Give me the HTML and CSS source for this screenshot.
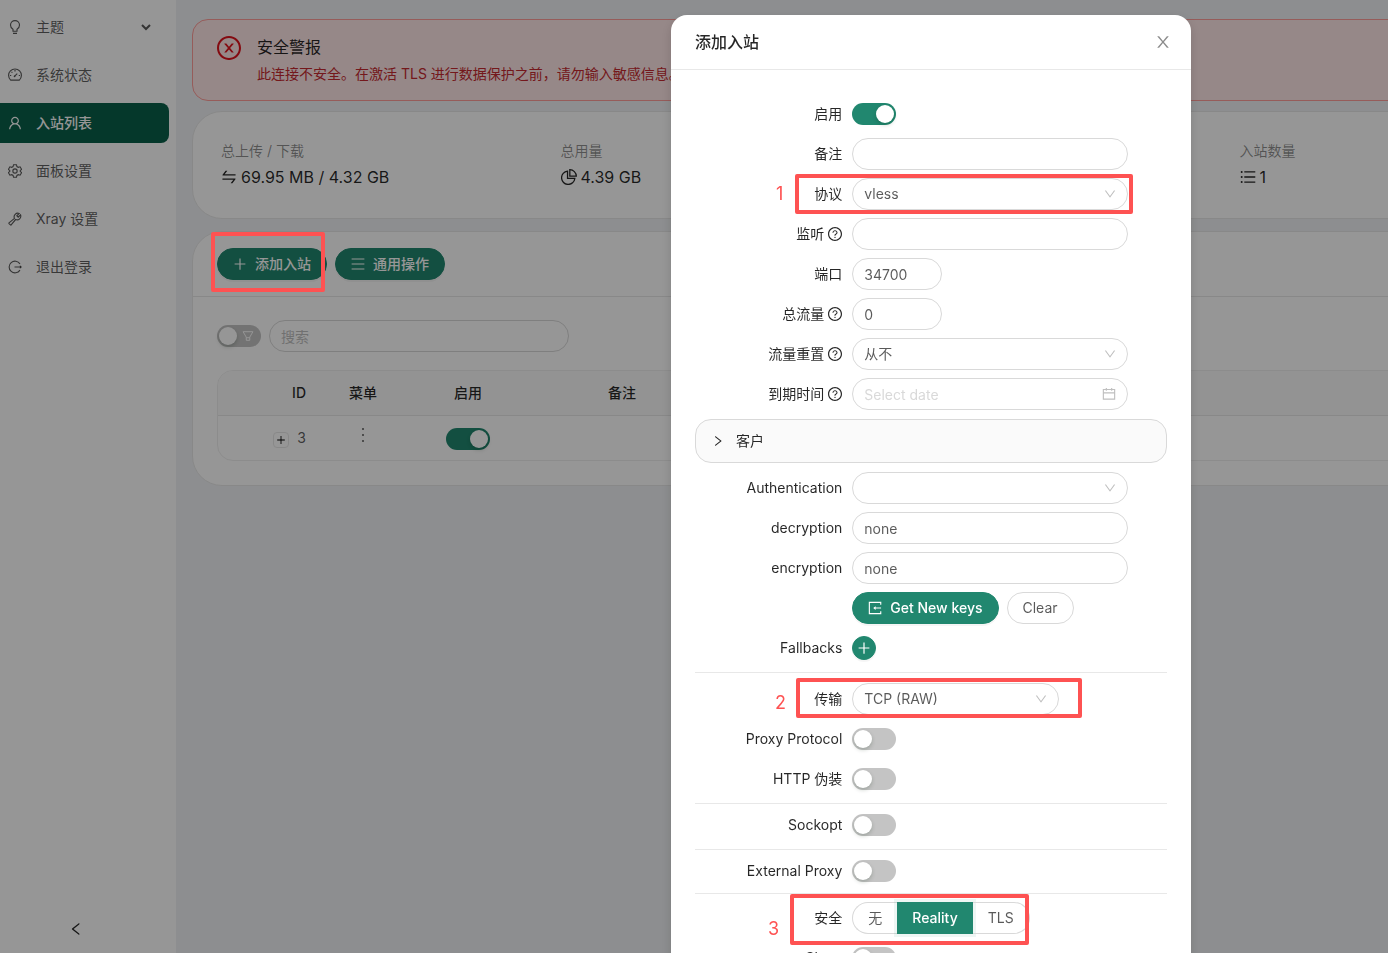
FILE: index.html
```html
<!DOCTYPE html>
<html lang="zh-CN">
<head>
    <meta charset="UTF-8">
    <meta name="viewport" content="width=device-width, initial-scale=1.0">
    <title>入站列表</title>
    <link rel="stylesheet" href="styles.css">
</head>
<body>
    <svg width="0" height="0" class="sprite" aria-hidden="true">
        <symbol id="i-plus" viewBox="64 64 896 896"><path d="M482 152h60q8 0 8 8v704q0 8-8 8h-60q-8 0-8-8V160q0-8 8-8z"/><path d="M176 474h672q8 0 8 8v60q0 8-8 8H176q-8 0-8-8v-60q0-8 8-8z"/></symbol>
        <symbol id="i-down" viewBox="64 64 896 896"><path d="M884 256h-75c-5.1 0-9.9 2.5-12.9 6.6L512 654.2 227.9 262.6c-3-4.1-7.8-6.6-12.9-6.6h-75c-6.5 0-10.3 7.4-6.5 12.7l352.6 486.1c12.8 17.6 39 17.6 51.7 0l352.6-486.1c3.9-5.3.1-12.7-6.4-12.7z"/></symbol>
        <symbol id="i-right" viewBox="64 64 896 896"><path d="M765.7 486.8L314.9 134.7A7.97 7.97 0 0 0 302 141v77.3c0 4.9 2.3 9.6 6.1 12.6l360 281.1-360 281.1c-3.9 3-6.1 7.7-6.1 12.6V883c0 6.7 7.7 10.4 12.9 6.3l450.8-352.1a31.96 31.96 0 0 0 0-50.4z"/></symbol>
        <symbol id="i-left" viewBox="64 64 896 896"><path d="M724 218.3V141c0-6.7-7.7-10.4-12.9-6.3L260.3 486.8a31.86 31.86 0 0 0 0 50.3l450.8 352.1c5.3 4.1 12.9.4 12.9-6.3v-77.3c0-4.9-2.3-9.6-6.1-12.6l-360-281 360-281.1c3.8-3 6.1-7.7 6.1-12.6z"/></symbol>
        <symbol id="i-close" viewBox="64 64 896 896"><path d="M563.8 512l262.5-312.9c4.4-5.2.7-13.1-6.1-13.1h-79.8c-4.7 0-9.2 2.1-12.3 5.7L511.6 449.8 295.1 191.7c-3-3.6-7.5-5.7-12.3-5.7H203c-6.8 0-10.5 7.9-6.1 13.1L459.4 512 196.9 824.9A7.95 7.95 0 0 0 203 838h79.8c4.7 0 9.2-2.1 12.3-5.7l216.5-258.1 216.5 258.1c3 3.6 7.5 5.7 12.3 5.7h79.8c6.8 0 10.5-7.9 6.1-13.1L563.8 512z"/></symbol>
        <symbol id="i-error" viewBox="64 64 896 896"><path d="M685.4 354.8c0-4.4-3.6-8-8-8l-66 .3L512 465.6l-99.3-118.4-66.1-.3c-4.4 0-8 3.5-8 8 0 1.9.7 3.7 1.9 5.2l130.1 155L340.5 670a8.32 8.32 0 0 0-1.9 5.2c0 4.4 3.6 8 8 8l66.1-.3L512 564.4l99.3 118.4 66 .3c4.4 0 8-3.5 8-8 0-1.9-.7-3.7-1.9-5.2L553.5 515l130.1-155c1.2-1.4 1.8-3.3 1.8-5.2z"/><path d="M512 65C264.6 65 64 265.6 64 513s200.6 448 448 448 448-200.6 448-448S759.4 65 512 65zm0 820c-205.4 0-372-166.6-372-372s166.6-372 372-372 372 166.6 372 372-166.6 372-372 372z"/></symbol>
        <symbol id="i-help" viewBox="64 64 896 896"><path d="M512 64C264.6 64 64 264.6 64 512s200.6 448 448 448 448-200.6 448-448S759.4 64 512 64zm0 820c-205.4 0-372-166.6-372-372s166.6-372 372-372 372 166.6 372 372-166.6 372-372 372z"/><path d="M623.6 316.7C593.6 290.4 554 276 512 276s-81.6 14.5-111.6 40.7C369.2 344 352 380.7 352 420v7.6c0 4.4 3.6 8 8 8h48c4.4 0 8-3.6 8-8V420c0-44.1 43.1-80 96-80s96 35.9 96 80c0 31.1-22 59.6-56.1 72.7-21.2 8.1-39.2 22.3-52.1 40.9-13.1 19-19.9 41.8-19.9 64.9V620c0 4.4 3.6 8 8 8h48c4.4 0 8-3.6 8-8v-22.7a48.3 48.3 0 0 1 30.9-44.8c59-22.7 97.1-74.7 97.1-132.5.1-39.3-17.1-76-48.3-103.3zM472 732a40 40 0 1 0 80 0 40 40 0 1 0-80 0z"/></symbol>
        <symbol id="i-user" viewBox="64 64 896 896"><path d="M858.5 763.6a374 374 0 0 0-80.6-119.5 375.63 375.63 0 0 0-119.5-80.6c-.4-.2-.8-.3-1.2-.5C719.5 518 760 444.7 760 362c0-137-111-248-248-248S264 225 264 362c0 82.7 40.5 156 102.8 201.1-.4.2-.8.3-1.2.5-44.8 18.9-85 46-119.5 80.6a375.63 375.63 0 0 0-80.6 119.5A371.7 371.7 0 0 0 136 901.8a8 8 0 0 0 8 8.2h60c4.4 0 7.9-3.5 8-7.8 2-77.2 33-149.5 87.8-204.3 56.7-56.7 132-87.9 212.2-87.9s155.5 31.2 212.2 87.9C779 752.7 810 825 812 902.2c.1 4.4 3.6 7.8 8 7.8h60a8 8 0 0 0 8-8.2c-1-47.8-10.9-94.3-29.5-138.2zM512 534c-45.9 0-89.1-17.9-121.6-50.4S340 407.9 340 362c0-45.9 17.9-89.1 50.4-121.6S466.1 190 512 190s89.1 17.9 121.6 50.4S684 316.1 684 362c0 45.9-17.9 89.1-50.4 121.6S557.9 534 512 534z"/></symbol>
        <symbol id="i-swap" viewBox="64 64 896 896"><path d="M847.9 592H152c-4.4 0-8 3.6-8 8v60c0 4.4 3.6 8 8 8h605.2L612.9 851c-4.1 5.2-.4 13 6.3 13h72.5c4.9 0 9.5-2.2 12.6-6.1l168.8-214.1c16.5-21 1.6-51.8-25.2-51.8zM872 356H266.8l144.3-183c4.1-5.2.4-13-6.3-13h-72.5c-4.9 0-9.5 2.2-12.6 6.1L150.9 380.2c-16.5 21-1.6 51.8 25.1 51.8h696c4.4 0 8-3.6 8-8v-60c0-4.4-3.6-8-8-8z"/></symbol>
        <symbol id="i-bulb" viewBox="64 64 896 896"><path class="line" d="M384 780V660C290 612 224 516 224 390a288 288 0 0 1 576 0c0 126-66 222-160 270v120zM384 922h256"/></symbol>
        <symbol id="i-dashboard" viewBox="64 64 896 896"><path class="line" d="M235 838a410 410 0 1 1 554 0zM488 590l170-170M512 190v90M190 542h80M754 542h80M290 310l54 54"/><circle cx="484" cy="594" r="56"/></symbol>
        <symbol id="i-setting" viewBox="64 64 896 896"><path class="line" d="M420 110h184l32 118 84 48 118-32 92 160-86 86v44l86 86-92 160-118-32-84 48-32 118H420l-32-118-84-48-118 32-92-160 86-86v-44l-86-86 92-160 118 32 84-48z"/><circle class="line" cx="512" cy="512" r="138"/></symbol>
        <symbol id="i-tool" viewBox="64 64 896 896"><path class="line" d="M865 244L715 394l-85-85 150-150a236 236 0 0 0-302 316L130 760q-20 20 0 42l92 92q20 20 42 0l286-348a236 236 0 0 0 315-302z"/></symbol>
        <symbol id="i-logout" viewBox="64 64 896 896"><path class="line" d="M830 310a376 376 0 1 0 0 404M480 512h400"/><path d="M825 395l135 117-135 117z"/></symbol>
        <symbol id="i-pie" viewBox="64 64 896 896"><path class="line" d="M430 186a372 372 0 1 0 408 408H430zM558 102v364h364A372 372 0 0 0 558 102z"/></symbol>
        <symbol id="i-list" viewBox="64 64 896 896"><path class="line" d="M304 228h616M304 512h616M304 796h616"/><circle cx="160" cy="228" r="56"/><circle cx="160" cy="512" r="56"/><circle cx="160" cy="796" r="56"/></symbol>
        <symbol id="i-menu" viewBox="64 64 896 896"><path class="line" d="M104 192h816M104 512h816M104 832h816"/></symbol>
        <symbol id="i-filter" viewBox="64 64 896 896"><path class="line" d="M144 192h736L642 598v234H382V598zM382 640h260"/></symbol>
        <symbol id="i-calendar" viewBox="64 64 896 896"><path class="line" d="M150 222h724v620H150zM150 440h724M340 120v180M684 120v180"/></symbol>
        <symbol id="i-import" viewBox="64 64 896 896"><path class="line" d="M880 300V150H150v724h730V724M500 512h400"/><path d="M400 512l150-120v240z"/></symbol>
    </svg>

    <div class="page">
        <aside class="sidebar">
            <nav class="menu">
                <button class="menu-item" type="button"><svg class="icon"><use href="#i-bulb"/></svg>主题<svg class="menu-arrow" viewBox="0 0 10 10"><path d="M1 3l4 4 4-4"/></svg></button>
                <a class="menu-item" href="#"><svg class="icon"><use href="#i-dashboard"/></svg>系统状态</a>
                <a class="menu-item active" href="#"><svg class="icon"><use href="#i-user"/></svg>入站列表</a>
                <a class="menu-item" href="#"><svg class="icon"><use href="#i-setting"/></svg>面板设置</a>
                <a class="menu-item" href="#"><svg class="icon"><use href="#i-tool"/></svg>Xray 设置</a>
                <a class="menu-item" href="#"><svg class="icon"><use href="#i-logout"/></svg>退出登录</a>
            </nav>
            <button class="sider-trigger" type="button" aria-label="收起"><svg class="icon"><use href="#i-left"/></svg></button>
        </aside>

        <main class="content">
            <div class="alert">
                <svg class="alert-icon"><use href="#i-error"/></svg>
                <div>
                    <div class="alert-title">安全警报</div>
                    <div class="alert-text">此连接不安全。在激活 TLS 进行数据保护之前，请勿输入敏感信息。</div>
                </div>
            </div>

            <section class="card stats">
                <div>
                    <div class="stat-title">总上传 / 下载</div>
                    <div class="stat-value"><svg class="icon"><use href="#i-swap"/></svg>69.95 MB / 4.32 GB</div>
                </div>
                <div>
                    <div class="stat-title">总用量</div>
                    <div class="stat-value"><svg class="icon"><use href="#i-pie"/></svg>4.39 GB</div>
                </div>
                <div class="stat-last">
                    <div class="stat-title">入站数量</div>
                    <div class="stat-value"><svg class="icon"><use href="#i-list"/></svg>1</div>
                </div>
            </section>

            <section class="card">
                <div class="card-head">
                    <div class="marked">
                        <button class="btn btn-primary" type="button"><svg class="icon"><use href="#i-plus"/></svg>添加入站</button>
                        <span class="mark mark-add"></span>
                    </div>
                    <button class="btn btn-primary" type="button"><svg class="icon"><use href="#i-menu"/></svg>通用操作</button>
                </div>
                <div class="card-body">
                    <div class="toolbar">
                        <label class="filter-switch"><input class="switch" type="checkbox" aria-label="筛选"><svg class="filter-icon"><use href="#i-filter"/></svg></label>
                        <input class="input search" type="text" placeholder="搜索" aria-label="搜索">
                    </div>
                    <table class="table">
                        <colgroup>
                            <col class="col-id"><col class="col-menu"><col class="col-enable"><col class="col-remark"><col><col class="col-traffic">
                        </colgroup>
                        <thead>
                            <tr><th class="cell-id">ID</th><th>菜单</th><th>启用</th><th>备注</th><th></th><th>流量</th></tr>
                        </thead>
                        <tbody>
                            <tr>
                                <td class="cell-id"><button class="expand" type="button" aria-label="展开"><svg><use href="#i-plus"/></svg></button>3</td>
                                <td><button class="more" type="button" aria-label="菜单"><svg viewBox="0 0 16 16"><circle cx="8" cy="2" r="1"/><circle cx="8" cy="8" r="1"/><circle cx="8" cy="14" r="1"/></svg></button></td>
                                <td><input class="switch" type="checkbox" checked aria-label="启用"></td>
                                <td></td>
                                <td></td>
                                <td><span class="tag">4.39 GB</span></td>
                            </tr>
                        </tbody>
                    </table>
                </div>
            </section>
        </main>
    </div>

    <div class="modal-mask">
        <div class="modal" role="dialog" aria-labelledby="modal-title">
            <header class="modal-head">
                <h2 id="modal-title">添加入站</h2>
                <button class="modal-close" type="button" aria-label="关闭"><svg class="icon"><use href="#i-close"/></svg></button>
            </header>
            <form class="modal-body">
                <div class="row"><label for="enable">启用</label><div class="control"><input class="switch" type="checkbox" id="enable" checked></div></div>
                <div class="row"><label for="remark">备注</label><div class="control"><input class="input" type="text" id="remark"></div></div>
                <div class="row">
                    <label for="protocol">协议</label>
                    <div class="control"><div class="select"><select class="input" id="protocol"><option>vless</option></select><svg><use href="#i-down"/></svg></div></div>
                    <span class="mark mark-1"></span><span class="mark-no no-1">1</span>
                </div>
                <div class="row"><label for="listen">监听<svg class="icon"><use href="#i-help"/></svg></label><div class="control"><input class="input" type="text" id="listen"></div></div>
                <div class="row"><label for="port">端口</label><div class="control"><input class="input input-number" type="text" id="port" value="34700"></div></div>
                <div class="row"><label for="total">总流量<svg class="icon"><use href="#i-help"/></svg></label><div class="control"><input class="input input-number" type="text" id="total" value="0"></div></div>
                <div class="row">
                    <label for="reset">流量重置<svg class="icon"><use href="#i-help"/></svg></label>
                    <div class="control"><div class="select"><select class="input" id="reset"><option>从不</option></select><svg><use href="#i-down"/></svg></div></div>
                </div>
                <div class="row">
                    <label for="expire">到期时间<svg class="icon"><use href="#i-help"/></svg></label>
                    <div class="control"><div class="select date"><input class="input" type="text" id="expire" placeholder="Select date"><svg><use href="#i-calendar"/></svg></div></div>
                </div>

                <button class="collapse" type="button"><svg><use href="#i-right"/></svg>客户</button>

                <div class="row">
                    <label for="auth">Authentication</label>
                    <div class="control"><div class="select"><select class="input" id="auth"><option></option></select><svg><use href="#i-down"/></svg></div></div>
                </div>
                <div class="row"><label for="dec">decryption</label><div class="control"><input class="input" type="text" id="dec" value="none"></div></div>
                <div class="row"><label for="enc">encryption</label><div class="control"><input class="input" type="text" id="enc" value="none"></div></div>
                <div class="row">
                    <div class="control control-only">
                        <button class="btn btn-primary" type="button"><svg class="icon"><use href="#i-import"/></svg>Get New keys</button>
                        <button class="btn" type="button">Clear</button>
                    </div>
                </div>
                <div class="row"><label for="fallback">Fallbacks</label><div class="control"><button class="btn btn-primary btn-round" type="button" id="fallback" aria-label="Add"><svg class="icon"><use href="#i-plus"/></svg></button></div></div>

                <hr class="divider-wide">

                <div class="row">
                    <label for="network">传输</label>
                    <div class="control"><div class="select select-short"><select class="input" id="network"><option>TCP (RAW)</option></select><svg><use href="#i-down"/></svg></div></div>
                    <span class="mark mark-2"></span><span class="mark-no no-2">2</span>
                </div>
                <div class="row"><label for="proxy">Proxy Protocol</label><div class="control"><input class="switch" type="checkbox" id="proxy"></div></div>
                <div class="row"><label for="http">HTTP 伪装</label><div class="control"><input class="switch" type="checkbox" id="http"></div></div>
                <hr>
                <div class="row"><label for="sockopt">Sockopt</label><div class="control"><input class="switch" type="checkbox" id="sockopt"></div></div>
                <hr>
                <div class="row"><label for="external">External Proxy</label><div class="control"><input class="switch" type="checkbox" id="external"></div></div>
                <hr class="divider-tight">
                <div class="row">
                    <label for="sec-none">安全</label>
                    <div class="control">
                        <div class="radio-group">
                            <label><input type="radio" name="security" id="sec-none">无</label>
                            <label><input type="radio" name="security" checked>Reality</label>
                            <label><input type="radio" name="security">TLS</label>
                        </div>
                    </div>
                    <span class="mark mark-3"></span><span class="mark-no no-3">3</span>
                </div>
                <div class="row"><label for="show">Show</label><div class="control"><input class="switch" type="checkbox" id="show"></div></div>
            </form>
        </div>
    </div>
</body>
</html>
```
FILE: styles.css
```css
* {
    box-sizing: border-box;
}
body {
    margin: 0;
    height: 100vh;
    overflow: hidden;
    font-family: Inter, "Noto Sans CJK SC", sans-serif;
    font-size: 14px;
    line-height: 22px;
    color: rgba(0, 0, 0, 0.85);
    background: #f0f2f5;
}
button, input, select {
    font: inherit;
    color: inherit;
    margin: 0;
}
button {
    cursor: pointer;
    border: none;
    background: none;
    padding: 0;
}
svg {
    fill: currentColor;
    flex: none;
}
.sprite {
    position: absolute;
}
.line {
    fill: none;
    stroke: currentColor;
    stroke-width: 72px;
}
.icon {
    width: 14px;
    height: 14px;
}
.page {
    display: flex;
    height: 100%;
    overflow: hidden;
}

/* sidebar */
.sidebar {
    flex: none;
    width: 176px;
    display: flex;
    flex-direction: column;
    justify-content: space-between;
    background: #fff;
}
.menu {
    display: flex;
    flex-direction: column;
    gap: 8px;
    padding: 7px 7px 0 0;
}
.menu-item {
    display: flex;
    align-items: center;
    gap: 14px;
    height: 40px;
    padding: 0 18px 0 8px;
    border-radius: 0 8px 8px 0;
    color: rgba(0, 0, 0, 0.65);
    text-decoration: none;
}
.menu-item.active {
    background: #0a6049;
    color: #fff;
    font-weight: 500;
}
.menu-arrow {
    width: 10px;
    height: 10px;
    margin-left: auto;
    fill: none;
    stroke: currentColor;
    stroke-width: 2px;
}
.sider-trigger {
    width: 152px;
    height: 48px;
    display: flex;
    align-items: center;
    justify-content: center;
}

/* content */
.content {
    flex: 1 0 1432px;
    padding: 19px 16px;
}
.alert {
    display: flex;
    gap: 16px;
    padding: 15px 24px;
    height: 82px;
    border: 1px solid #ff9c99;
    border-radius: 16px;
    background: #ffe7e7;
    margin-bottom: 10px;
}
.alert-icon {
    width: 24px;
    height: 24px;
    margin-top: 1px;
    color: #e0121c;
}
.alert-title {
    font-size: 16px;
    line-height: 24px;
    margin-bottom: 4px;
}
.alert-text {
    color: #c52a30;
}
.card {
    border: 1px solid #e8e8e8;
    border-radius: 30px;
    background: #fff;
    margin-bottom: 12px;
}
.stats {
    display: grid;
    grid-template-columns: repeat(4, 1fr);
    padding: 28px 12px 28px 28px;
    height: 108px;
}
.stat-last {
    grid-column: 4;
}
.stat-title {
    color: rgba(0, 0, 0, 0.45);
    margin-bottom: 3px;
}
.stat-value {
    display: flex;
    align-items: center;
    gap: 4px;
    font-size: 16px;
    line-height: 24px;
}
.stat-value .icon {
    width: 16px;
    height: 16px;
}
.card-head {
    display: flex;
    gap: 8px;
    padding: 16px 24px;
    border-bottom: 1px solid #e8e8e8;
}
.card-body {
    padding: 23px 24px 24px;
}
.toolbar {
    display: flex;
    align-items: center;
    gap: 8px;
    margin-bottom: 18px;
}
.filter-switch {
    display: flex;
    position: relative;
}
.filter-icon {
    position: absolute;
    right: 7px;
    top: 5px;
    width: 12px;
    height: 12px;
    color: #fff;
}
.search.input {
    width: 300px;
}

.table {
    width: 100%;
    table-layout: fixed;
    border: 1px solid #efefef;
    border-radius: 16px;
    border-spacing: 0;
    overflow: hidden;
}
.col-id {
    width: 96px;
}
.col-menu {
    width: 98px;
}
.col-enable {
    width: 112px;
}
.col-remark {
    width: 196px;
}
.col-traffic {
    width: 168px;
}
.table th, .table td {
    height: 44px;
    padding: 0 8px;
    text-align: center;
}
.table th {
    height: 45px;
    background: #fafafa;
    font-weight: 500;
    border-bottom: 1px solid #e8e8e8;
}
.table td {
    color: rgba(0, 0, 0, 0.65);
}
.table .cell-id {
    text-align: right;
}
.table .switch {
    vertical-align: middle;
}
.expand {
    width: 16px;
    height: 16px;
    margin-right: 8px;
    border: 1px solid #e8e8e8;
    border-radius: 4px;
    vertical-align: -4px;
    color: #000;
}
.expand svg {
    display: block;
    width: 10px;
    height: 10px;
    margin: 2px;
}
.more svg {
    display: block;
    width: 16px;
    height: 16px;
}
.tag {
    display: inline-block;
    min-width: 88px;
    padding: 0 7px;
    font-size: 12px;
    line-height: 20px;
    text-align: left;
    border: 1px solid #d9a8d0;
    border-radius: 30px;
    background: #f9f0f8;
    color: #8a2c78;
}

/* controls */
.btn {
    display: inline-flex;
    align-items: center;
    justify-content: center;
    gap: 8px;
    height: 32px;
    padding: 0 15px;
    border: 1px solid #d9d9d9;
    border-radius: 30px;
    background: #fff;
    color: rgba(0, 0, 0, 0.65);
}
.btn-primary {
    border-color: #21876f;
    background: #21876f;
    color: #fff;
    font-weight: 500;
    box-shadow: 0 2px 0 rgba(0, 0, 0, 0.04);
}
.btn-round {
    width: 24px;
    height: 24px;
    padding: 0;
}
.input {
    display: block;
    width: 100%;
    height: 32px;
    padding: 4px 11px;
    border: 1px solid #d9d9d9;
    border-radius: 30px;
    background: #fff;
    color: rgba(0, 0, 0, 0.65);
    appearance: none;
    outline: none;
}
.input::placeholder {
    color: #bfbfbf;
    opacity: 1;
}
.input-number {
    width: 90px;
}
.select {
    position: relative;
    width: 100%;
}
.select-short {
    width: 75%;
}
.select svg {
    position: absolute;
    right: 12px;
    top: 10px;
    width: 12px;
    height: 12px;
    color: #bfbfbf;
    pointer-events: none;
}
.date svg {
    top: 9px;
    width: 14px;
    height: 14px;
}
.date .input::placeholder {
    color: #d9d9d9;
}
.switch {
    appearance: none;
    position: relative;
    display: inline-block;
    width: 44px;
    height: 22px;
    border-radius: 100px;
    background: #c4c4c4;
    cursor: pointer;
}
.switch::before {
    content: "";
    position: absolute;
    top: 2px;
    left: 2px;
    width: 18px;
    height: 18px;
    border-radius: 9px;
    background: #fff;
    box-shadow: 0 2px 4px rgba(0, 35, 11, 0.2);
}
.switch:checked {
    background: #21876f;
}
.switch:checked::before {
    left: 24px;
}
.radio-group {
    display: flex;
}
.radio-group label {
    height: 32px;
    padding: 0 15px;
    line-height: 30px;
    border: 1px solid #d9d9d9;
    border-width: 1px 0;
    color: rgba(0, 0, 0, 0.65);
}
.radio-group label:first-child {
    border-left-width: 1px;
    border-radius: 30px 0 0 30px;
}
.radio-group label:last-child {
    border-right-width: 1px;
    border-radius: 0 30px 30px 0;
}
.radio-group label:has(:checked) {
    background: #21876f;
    border-color: #21876f;
    color: #fff;
    font-weight: 500;
    box-shadow: 0 0 0 3px rgba(33, 135, 111, 0.08);
}
.radio-group input {
    position: absolute;
    opacity: 0;
    pointer-events: none;
}

/* modal */
.modal-mask {
    position: fixed;
    inset: 0;
    z-index: 10;
    overflow: hidden;
    background: rgba(0, 0, 0, 0.41);
}
.modal {
    width: 520px;
    margin: 15px 0 0 671px;
    border-radius: 16px;
    background: #fff;
    box-shadow: 0 4px 12px rgba(0, 0, 0, 0.15);
}
.modal-head {
    display: flex;
    align-items: center;
    justify-content: space-between;
    padding: 16px 20px 16px 24px;
    border-bottom: 1px solid #e8e8e8;
}
.modal-head h2 {
    margin: 0;
    font-size: 16px;
    font-weight: 500;
    line-height: 22px;
}
.modal-close {
    display: flex;
    color: rgba(0, 0, 0, 0.45);
}
.modal-close .icon {
    width: 16px;
    height: 16px;
}
.modal-body {
    padding: 24px;
}
.row {
    position: relative;
    display: grid;
    grid-template-columns: 8fr 14fr 2fr;
    align-items: center;
    height: 40px;
}
.row > label {
    display: flex;
    align-items: center;
    justify-content: flex-end;
    gap: 4px;
    padding-right: 10px;
}
.control {
    display: flex;
    align-items: center;
    gap: 8px;
}
.control-only {
    grid-column: 2;
}
.collapse {
    display: flex;
    align-items: center;
    gap: 12px;
    width: 100%;
    height: 44px;
    margin: 5px 0;
    padding: 0 16px;
    border: 1px solid #d9d9d9;
    border-radius: 16px;
    background: #fafafa;
}
.collapse svg {
    width: 12px;
    height: 12px;
}
.modal-body hr {
    margin: 4px 0 1px;
    border: none;
    border-top: 1px solid #e8e8e8;
}
.modal-body .divider-wide {
    margin: 4px 0 6px;
}
.modal-body .divider-tight {
    margin: 2px 0 4px;
}

/* red step marks */
.marked {
    position: relative;
    display: flex;
}
.mark {
    position: absolute;
    border: 4px solid #fe5252;
    border-radius: 2px;
    pointer-events: none;
}
.mark-add {
    z-index: 20;
    inset: -16px 2px -12px -6px;
}
.mark-1 {
    inset: 0 34px 0 100px;
}
.mark-2 {
    inset: -1px 85px 1px 101px;
}
.mark-3 {
    inset: -4px 138px -7px 95px;
}
.mark-no {
    position: absolute;
    font-size: 18px;
    line-height: 24px;
    color: #fe5252;
}
.no-1 {
    left: 81px;
    top: 8px;
}
.no-2 {
    left: 80px;
    top: 12px;
}
.no-3 {
    left: 73px;
    top: 19px;
}
```
